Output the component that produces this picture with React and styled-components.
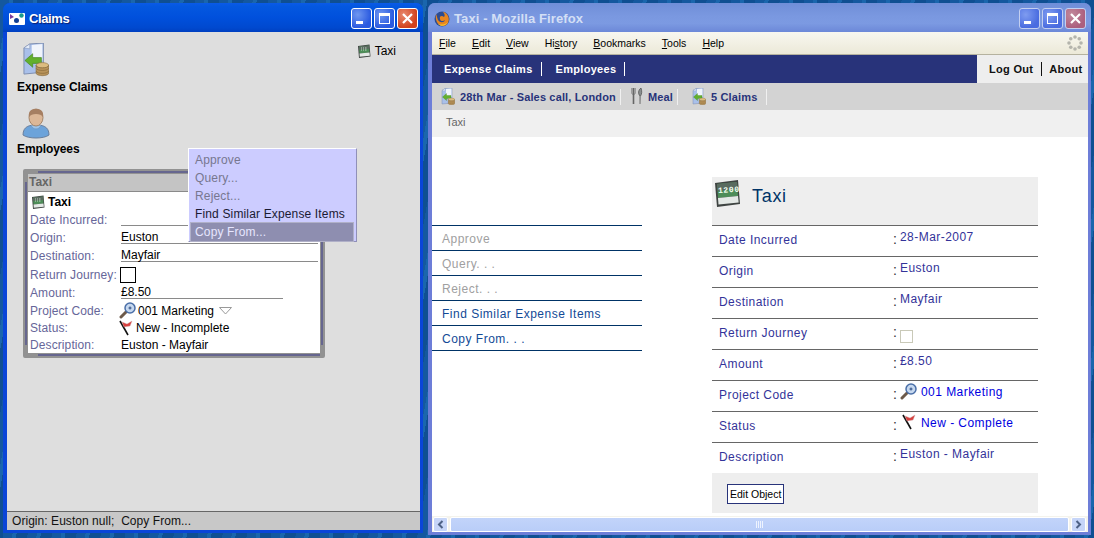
import styled, { createGlobalStyle } from "styled-components";

const GlobalStyle = createGlobalStyle`
  html, body {
    margin: 0;
    padding: 0;
    overflow: hidden;
    background: #14589f;
  }
  * { box-sizing: border-box; }
`;

/* drawings */
const CalcIcon = ({ size = 14 }) => (
  <svg width={size} height={size} viewBox="0 0 28 28">
    <path d="M2 4 L25 1 L27 25 L4 28 Z" fill="#3f4442" />
    <path d="M4 5 L24 3 L25 17 L5 19 Z" fill="#4d8d58" />
    <path d="M4 5 L24 3 L24.500 10 L4.500 12 Z" fill="#5a6b60" />
    <path d="M5 19 L25 17 L25.700 23.500 L5.500 25.500 Z" fill="#e4e9e6" />
    {size > 20 ? (
      <text x="5" y="13.500" fontSize="8" fontWeight="bold" fontFamily="Liberation Mono, monospace" fill="#f2fff2" transform="rotate(-4 14 12)">1200</text>
    ) : (
      <path d="M8 8h2M12 8h2M16 8h3M8 12h2M12 12h2M16 12h3" stroke="#e8f4e8" strokeWidth="1.500" />
    )}
  </svg>
);

const ClaimsIcon = ({ size = 34 }) => (
  <svg width={size * 0.8} height={size} viewBox="0 0 28 35">
    <path d="M2 5 L8 1 L22 0 L22 30 L2 32 Z" fill="#a9c0ea" stroke="#7d8db0" />
    <path d="M2 5 L8 1 L8 6 Z" fill="#e4ecf8" stroke="#7d8db0" strokeWidth=".5" />
    <path d="M10 2 L21 1 L21 18 L10 19 Z" fill="#f0f4fb" />
    <path d="M3 18 L11 11 L11 15 L20 15 L20 21 L11 21 L11 25 Z" fill="#62b02c" stroke="#3c7d18" strokeWidth=".6" />
    <ellipse cx="21" cy="23" rx="6.500" ry="2.800" fill="#dcbc80" stroke="#8d6f3a" strokeWidth=".6" />
    <path d="M14.500 23 V31 C14.500 34.500 27.500 34.500 27.500 31 V23 C27.500 26.500 14.500 26.500 14.500 23Z" fill="#b8935a" stroke="#7f6334" strokeWidth=".6" />
    <path d="M14.500 26 C16 29 26 29 27.500 26M14.500 29 C16 32 26 32 27.500 29" fill="none" stroke="#7f6334" strokeWidth=".6" />
  </svg>
);

const PersonIcon = () => (
  <svg width="28" height="31" viewBox="0 0 28 31">
    <path d="M1 27 C1 18 8 17 14 17 C20 17 27 18 27 27 C22 31 6 31 1 27Z" fill="#6ca3da" stroke="#6a7f9c" />
    <path d="M9 17.500 C11 22 17 22 19 17.500" fill="#9cc4ea" stroke="#6a8fb8" strokeWidth=".6" />
    <ellipse cx="14" cy="9.500" rx="7" ry="8.500" fill="#dcb797" stroke="#a58569" />
    <path d="M7 9 C6 2 10 1 14 1 C18 1 22 2 21 9 C19 5 9 5 7 9Z" fill="#a67f62" />
  </svg>
);

const MagnifierIcon = () => (
  <svg width="17" height="17" viewBox="0 0 17 17">
    <path d="M2 15 L7 10" stroke="#6d5a4a" strokeWidth="3" strokeLinecap="round" />
    <circle cx="11" cy="6" r="5" fill="#c6d8ef" stroke="#4a6fa8" strokeWidth="1.500" />
    <path d="M9.500 6h3M11 4.500v3" stroke="#2b4a80" strokeWidth="1" />
  </svg>
);

const FlagIcon = () => (
  <svg width="15" height="16" viewBox="0 0 15 16">
    <path d="M1 1 L9 15" stroke="#111" strokeWidth="1.600" />
    <path d="M3 2 L8 4 L13 1 L11 6 L5 7 Z" fill="#d8403f" stroke="#caa" strokeWidth=".4" />
  </svg>
);

const CutleryIcon = () => (
  <svg width="12" height="17" viewBox="0 0 12 17">
    <path d="M1 0 V5 C1 7 4 7 4 5 V0 M2.500 0 V16" fill="none" stroke="#666" strokeWidth="1" />
    <path d="M2.500 6 V16" stroke="#666" strokeWidth="1.600" />
    <path d="M9 16 V8 C7 6 7 2 10 0 C11 3 11 6 9.500 8" fill="#8a8f8f" stroke="#555" strokeWidth=".8" />
  </svg>
);

const FirefoxIcon = () => (
  <svg width="16" height="16" viewBox="0 0 16 16">
    <circle cx="8" cy="8" r="7.500" fill="#2d4c90" />
    <path d="M2 3 C1 8 3 15 9 15 C14 15 16 9 14 5 C13 3 11 1 9 1 C11 3 11 5 10 6 C8 4 5 5 6 8 C6 10 9 11 11 9 C10 12 6 12 4 9 C3 7 3 5 2 3Z" fill="#e8861f" />
    <path d="M4 13 C7 16 12 15 14 11 C11 14 7 14 4 13Z" fill="#f4c430" />
  </svg>
);

const AppIcon = () => (
  <svg width="16" height="14" viewBox="0 0 16 14">
    <rect x="0" y="1" width="16" height="12" rx="1" fill="#fff" />
    <path d="M1 2 L5 5 L1 7 Z" fill="#7b3b9c" />
    <circle cx="12.500" cy="3.500" r="2.200" fill="#1a9a8c" />
    <circle cx="7.500" cy="8.500" r="2.500" fill="#123f94" />
  </svg>
);

const Spinner = () => (
  <svg width="16" height="16" viewBox="0 0 16 16">
    {[0, 45, 90, 135, 180, 225, 270, 315].map((a) => (
      <circle
        key={a}
        cx={8 + 6 * Math.cos((a * Math.PI) / 180)}
        cy={8 + 6 * Math.sin((a * Math.PI) / 180)}
        r="1.800"
        fill="#b4b4ac"
      />
    ))}
  </svg>
);

const Desktop = styled.div`
  display: flex;
  align-items: flex-start;
  gap: 5px;
  width: 1094px;
  height: 538px;
  padding: 3px;
  background: repeating-linear-gradient(100deg, #14589f 0 9px, #1a66ad 9px 13px, #0f4f92 13px 24px);
`;

const Window = styled.div`
  display: flex;
  flex-direction: column;
  width: ${(p) => p.$w}px;
  height: ${(p) => p.$h}px;
  border-radius: 7px 7px 0 0;
  padding: 0 3px 3px 4px;
  background: ${(p) => (p.$active ? "#0a45d8" : "#6d7ed8")};
`;

const TitleBar = styled.div`
  display: flex;
  align-items: center;
  flex: none;
  height: 29px;
  gap: 4px;
  margin: 0 -3px 0 -4px;
  padding: 2px 5px 0 6px;
  border-radius: 7px 7px 0 0;
  font: bold 13px "Liberation Sans", Arial, sans-serif;
  color: ${(p) => (p.$active ? "#fff" : "#d3dff5")};
  text-shadow: ${(p) => (p.$active ? "1px 1px 1px #0a1f70" : "none")};
  letter-spacing: ${(p) => (p.$active ? "-.4px" : ".1px")};
  background: ${(p) =>
    p.$active
      ? "linear-gradient(#0a5ae8 0, #0458e0 12%, #0050dc 50%, #0049cf 85%, #003fc0 100%)"
      : "linear-gradient(#6f8ed8 0, #7a98e0 45%, #7c9ae2 70%, #6c88d8 100%)"};
`;

const TitleText = styled.span`
  flex: 1;
`;

const Controls = styled.div`
  display: flex;
  gap: 2px;
`;

const Control = styled.div`
  width: 21px;
  height: 21px;
  border-radius: 3px;
  border: 1px solid ${(p) => (p.$active ? "#fff" : "#c3cff0")};
  background: ${(p) =>
    p.$close
      ? p.$active
        ? "radial-gradient(circle at 30% 30%, #e88a70, #d2421c 70%)"
        : "radial-gradient(circle at 30% 30%, #c28a9c, #ac5f7e 70%)"
      : p.$active
      ? "radial-gradient(circle at 30% 30%, #6f97f0, #2a5ae0 70%)"
      : "radial-gradient(circle at 30% 30%, #7f9cf0, #4a6ce0 70%)"};

  svg {
    display: block;
  }
`;

const MinGlyph = () => (
  <svg width="19" height="19" viewBox="0 0 19 19"><rect x="4" y="12" width="7" height="3" fill="#fff" /></svg>
);
const MaxGlyph = () => (
  <svg width="19" height="19" viewBox="0 0 19 19"><rect x="4.500" y="4.500" width="10" height="10" fill="none" stroke="#fff" /><rect x="4" y="4" width="11" height="3" fill="#fff" /></svg>
);
const CloseGlyph = () => (
  <svg width="19" height="19" viewBox="0 0 19 19"><path d="M5 5 L14 14 M14 5 L5 14" stroke="#fff" strokeWidth="2.200" /></svg>
);

const WindowControls = ({ active }) => (
  <Controls>
    <Control $active={active}><MinGlyph /></Control>
    <Control $active={active}><MaxGlyph /></Control>
    <Control $active={active} $close><CloseGlyph /></Control>
  </Controls>
);

/* left window */
const ClaimsBody = styled.div`
  position: relative;
  flex: 1;
  background: #dedede;
  padding: 11px 0 0 10px;
  font: 12px "Liberation Sans", Arial, sans-serif;
  color: #000;
`;

const ClassIcon = styled.div`
  display: flex;
  flex-direction: column;
  align-items: flex-start;
  height: ${(p) => p.$h}px;

  svg {
    display: block;
    margin-left: 5px;
  }
`;

const ClassName = styled.div`
  font-weight: bold;
  letter-spacing: -0.1px;
  line-height: 15px;
  margin-top: ${(p) => p.$mt}px;
`;

const Instance = styled.div`
  position: absolute;
  top: 12px;
  right: 24px;
  display: flex;
  align-items: center;
  gap: 4px;
`;

const ObjectWindow = styled.div`
  position: absolute;
  left: 16px;
  top: 137px;
  width: 302px;
  height: 189px;
  border: 5px solid #929292;
  border-radius: 2px;
  background: #fff;

  /* the darker stripes in the middle of the frame */
  &::before {
    content: "";
    position: absolute;
    left: 10px;
    right: 0;
    top: -3px;
    bottom: -3px;
    border-top: 2px solid #66668f;
    border-bottom: 2px solid #66668f;
  }

  &::after {
    content: "";
    position: absolute;
    left: -3px;
    right: -3px;
    top: 8px;
    bottom: 8px;
    border-left: 2px solid #66668f;
    border-right: 2px solid #66668f;
  }
`;

const ObjectTitle = styled.div`
  height: 18px;
  padding: 2px 0 0 1px;
  background: #c4c4c4;
  border-bottom: 1px solid #8a8a8a;
  font: bold 12px/13px "Liberation Sans", Arial, sans-serif;
  color: #666;
`;

const ObjectHead = styled.div`
  display: flex;
  align-items: center;
  gap: 3px;
  height: 19px;
  padding-left: 3px;
  font-weight: bold;
`;

const Field = styled.div`
  display: flex;
  align-items: center;
  height: ${(p) => p.$h || 18}px;
  padding-left: 2px;
`;

const FieldLabel = styled.div`
  flex: none;
  width: 91px;
  color: #666699;
  letter-spacing: 0.1px;
`;

const FieldValue = styled.div`
  display: flex;
  align-items: center;
  gap: 2px;
  width: ${(p) => p.$w || "auto"};
  height: 100%;
  ${(p) => p.$line && "border-bottom: 1px solid #8a8a8a; height: 11px; line-height: 11px;"}

  > svg:first-child {
    margin-left: -2px;
  }
`;

const Checkbox = styled.div`
  width: 16px;
  height: 16px;
  margin-left: -1px;
  border: 1px solid #000;
`;

const Triangle = () => (
  <svg width="13" height="8" viewBox="0 0 13 8" style={{ marginLeft: 3 }}>
    <path d="M.5 .5 H12.500 L6.500 7 Z" fill="none" stroke="#999" />
  </svg>
);

const Popup = styled.div`
  position: absolute;
  left: 181px;
  top: 116px;
  width: 169px;
  height: 94px;
  padding: 2px 3px 0 2px;
  background: #ccccff;
  border: 1px solid;
  border-color: #fff #9090b8 #9090b8 #fff;
  letter-spacing: 0.15px;
`;

const PopupItem = styled.div`
  height: 18px;
  line-height: 18px;
  padding-left: 4px;
  color: ${(p) => (p.$selected ? "#e6e6ff" : p.$disabled ? "#77778f" : "#1a1a33")};
  background: ${(p) => (p.$selected ? "#8e8eb0" : "transparent")};
  ${(p) => p.$selected && "outline: 1px solid #b0b0c8;"}
`;

const StatusBar = styled.div`
  flex: none;
  height: 19px;
  padding-left: 5px;
  background: #c8c8c8;
  border-top: 1px solid #666;
  font: 12px/18px "Liberation Sans", Arial, sans-serif;
  letter-spacing: 0.05px;
  color: #111;
  white-space: pre;
`;

/* right window */
const BrowserBody = styled.div`
  display: flex;
  flex-direction: column;
  flex: 1;
  min-height: 0;
  background: #fff;
  font-family: "Liberation Sans", Arial, sans-serif;
`;

const MenuBar = styled.div`
  display: flex;
  align-items: center;
  justify-content: space-between;
  flex: none;
  height: 23px;
  padding: 0 5px 0 7px;
  background: linear-gradient(#f8f7f0, #ece9d8);
  border-bottom: 1px solid #b5b29f;
`;

const Menus = styled.div`
  display: flex;
  gap: 16px;
  font-size: 10.5px;
  color: #000;
`;

const MenuName = styled.span`
  u { text-underline-offset: 1px; }
`;

const NavBar = styled.div`
  display: flex;
  flex: none;
  height: 28px;
  font-size: 11px;
  font-weight: bold;
  letter-spacing: 0.3px;
  white-space: nowrap;
`;

const NavMain = styled.div`
  display: flex;
  align-items: center;
  flex: 1;
  padding-left: 12px;
  background: #28337a;
  color: #fff;
`;

const NavAside = styled.div`
  display: flex;
  align-items: center;
  flex: none;
  width: 111px;
  padding-left: 12px;
  background: #eeeeee;
  color: #111;
`;

const NavLink = styled.div`
  padding-right: 8px;
  margin-right: ${(p) => p.$gap || 14}px;
  line-height: 14px;
  border-right: 1px solid ${(p) => p.$sep || "transparent"};

  &:last-child {
    margin-right: 0;
  }
`;

const ToolBar = styled.div`
  display: flex;
  align-items: center;
  flex: none;
  height: 27px;
  padding-left: 9px;
  background: #d3d3d3;
  color: #28337a;
  font-size: 11px;
  font-weight: bold;
  letter-spacing: 0.15px;
  white-space: nowrap;
`;

const ToolItem = styled.div`
  display: flex;
  align-items: center;
  gap: 5px;
  height: 16px;
  margin-right: ${(p) => p.$mr || 0}px;
  padding-right: ${(p) => p.$pr || 4}px;
  border-right: 1px solid #f0f0f0;
`;

const Crumb = styled.div`
  flex: none;
  height: 27px;
  padding-left: 14px;
  background: #f0f0f0;
  font-size: 11px;
  line-height: 25px;
  color: #666;
`;

const Page = styled.div`
  display: flex;
  flex: 1;
  min-height: 0;
  padding-top: 40px;
  overflow: hidden;
`;

const ActionList = styled.div`
  flex: none;
  width: 210px;
  margin-top: 48px;
  margin-right: 70px;
  align-self: flex-start;
  border-top: 1px solid #003366;
`;

const Action = styled.div`
  height: 25px;
  padding-left: 10px;
  border-bottom: 1px solid #003366;
  font-size: 12px;
  line-height: 26px;
  letter-spacing: 0.5px;
  color: ${(p) => (p.$disabled ? "#a0a0a0" : "#124a96")};
`;

const Card = styled.div`
  flex: none;
  width: 326px;
`;

const CardHead = styled.div`
  display: flex;
  align-items: flex-start;
  gap: 11px;
  height: 49px;
  padding: 2px 0 0 1px;
  background: #eeeeee;
  border-bottom: 1px solid #666;
  font-size: 18px;
  letter-spacing: 0.7px;
  color: #003366;
`;

const CardTitle = styled.div`
  padding-top: 7px;
  line-height: 20px;
`;

const CardRow = styled.div`
  display: grid;
  grid-template-columns: 174px 7px 1fr;
  height: ${(p) => (p.$last ? 30 : 31)}px;
  padding-left: 7px;
  border-bottom: ${(p) => (p.$last ? "none" : "1px solid #666")};
  font-size: 12px;
  letter-spacing: 0.45px;
  color: #333399;
`;

const RowLabel = styled.div`
  line-height: 28px;
`;

const RowColon = styled.div`
  font-size: 14px;
  line-height: 27px;
  color: #333;
`;

const RowValue = styled.div`
  display: flex;
  align-items: flex-start;
  gap: 4px;
  padding-top: 4px;
  line-height: 15px;
  color: ${(p) => (p.$link ? "#0000e0" : "#333399")};

  svg {
    margin-top: -2px;
  }
`;

const FlagSlot = styled.span`
  display: inline-flex;
  margin-left: 2px;
`;

const WebCheckbox = styled.div`
  width: 13px;
  height: 13px;
  margin-top: 11px;
  border: 1px solid #c9c9b8;
`;

const CardFoot = styled.div`
  height: 40px;
  padding: 11px 0 0 15px;
  background: #eeeeee;
`;

const EditButton = styled.div`
  display: inline-block;
  height: 20px;
  padding: 0 2px;
  border: 1px solid #28337a;
  background: #fff;
  font-size: 10.5px;
  line-height: 18px;
  color: #000;
`;

const Scrollbar = styled.div`
  display: flex;
  flex: none;
  gap: 2px;
  height: 16px;
  padding: 1px 2px 0 1px;
  background: #f4f3ec;
`;

const ScrollButton = styled.div`
  display: flex;
  align-items: center;
  justify-content: center;
  width: 15px;
  height: 15px;
  border: 1px solid #fff;
  border-radius: 2px;
  background: #c6d5f8;
`;

const ScrollThumb = styled.div`
  display: flex;
  align-items: center;
  justify-content: center;
  flex: 1;
  height: 15px;
  border: 1px solid #fff;
  border-radius: 2px;
  background: linear-gradient(#c2d4fa, #b9cdf8);
`;

const Chevron = ({ left }) => (
  <svg width="7" height="9" viewBox="0 0 7 9">
    <path d={left ? "M5.500 1 L2 4.500 L5.500 8" : "M1.500 1 L5 4.500 L1.500 8"} fill="none" stroke="#4d6185" strokeWidth="2" />
  </svg>
);

const Grip = () => (
  <svg width="8" height="7" viewBox="0 0 8 7">
    <path d="M.5 0V7M2.500 0V7M4.500 0V7M6.500 0V7" stroke="#eef3fe" />
  </svg>
);

const rows = [
  { label: "Date Incurred", value: "28-Mar-2007" },
  { label: "Origin", value: "Euston" },
  { label: "Destination", value: "Mayfair" },
  { label: "Return Journey", check: true },
  { label: "Amount", value: "£8.50" },
  { label: "Project Code", value: "001 Marketing", link: true, icon: <MagnifierIcon /> },
  { label: "Status", value: "New - Complete", link: true, icon: <FlagSlot><FlagIcon /></FlagSlot> },
  { label: "Description", value: "Euston - Mayfair", last: true },
];

const App = () => (
  <>
    <GlobalStyle />
    <Desktop>
      <Window $w={420} $h={530} $active>
        <TitleBar $active>
          <AppIcon />
          <TitleText>Claims</TitleText>
          <WindowControls active />
        </TitleBar>
        <ClaimsBody>
          <ClassIcon $h={65}>
            <ClaimsIcon />
            <ClassName $mt={3}>Expense Claims</ClassName>
          </ClassIcon>
          <ClassIcon $h={60}>
            <PersonIcon />
            <ClassName $mt={3}>Employees</ClassName>
          </ClassIcon>
          <Instance>
            <CalcIcon />
            Taxi
          </Instance>
          <ObjectWindow>
            <ObjectTitle>Taxi</ObjectTitle>
            <ObjectHead>
              <CalcIcon />
              Taxi
            </ObjectHead>
            <Field>
              <FieldLabel>Date Incurred:</FieldLabel>
              <FieldValue $line $w="197px" />
            </Field>
            <Field>
              <FieldLabel>Origin:</FieldLabel>
              <FieldValue $line $w="197px">Euston</FieldValue>
            </Field>
            <Field>
              <FieldLabel>Destination:</FieldLabel>
              <FieldValue $line $w="197px">Mayfair</FieldValue>
            </Field>
            <Field $h={19}>
              <FieldLabel>Return Journey:</FieldLabel>
              <Checkbox />
            </Field>
            <Field>
              <FieldLabel>Amount:</FieldLabel>
              <FieldValue $line $w="162px">£8.50</FieldValue>
            </Field>
            <Field $h={17}>
              <FieldLabel>Project Code:</FieldLabel>
              <FieldValue>
                <MagnifierIcon />
                001 Marketing
                <Triangle />
              </FieldValue>
            </Field>
            <Field $h={17}>
              <FieldLabel>Status:</FieldLabel>
              <FieldValue>
                <FlagIcon />
                New - Incomplete
              </FieldValue>
            </Field>
            <Field $h={17}>
              <FieldLabel>Description:</FieldLabel>
              <FieldValue>Euston - Mayfair</FieldValue>
            </Field>
          </ObjectWindow>
          <Popup>
            <PopupItem $disabled>Approve</PopupItem>
            <PopupItem $disabled>Query...</PopupItem>
            <PopupItem $disabled>Reject...</PopupItem>
            <PopupItem>Find Similar Expense Items</PopupItem>
            <PopupItem $selected>Copy From...</PopupItem>
          </Popup>
        </ClaimsBody>
        <StatusBar>Origin: Euston null;  Copy From...</StatusBar>
      </Window>

      <Window $w={663} $h={532}>
        <TitleBar>
          <FirefoxIcon />
          <TitleText>Taxi - Mozilla Firefox</TitleText>
          <WindowControls />
        </TitleBar>
        <BrowserBody>
          <MenuBar>
            <Menus>
              <MenuName><u>F</u>ile</MenuName>
              <MenuName><u>E</u>dit</MenuName>
              <MenuName><u>V</u>iew</MenuName>
              <MenuName>Hi<u>s</u>tory</MenuName>
              <MenuName><u>B</u>ookmarks</MenuName>
              <MenuName><u>T</u>ools</MenuName>
              <MenuName><u>H</u>elp</MenuName>
            </Menus>
            <Spinner />
          </MenuBar>
          <NavBar>
            <NavMain>
              <NavLink $sep="#fff">Expense Claims</NavLink>
              <NavLink $sep="#fff">Employees</NavLink>
            </NavMain>
            <NavAside>
              <NavLink $sep="#111" $gap={7}>Log Out</NavLink>
              <NavLink>About</NavLink>
            </NavAside>
          </NavBar>
          <ToolBar>
            <ToolItem $mr={10}>
              <ClaimsIcon size={17.5} />
              28th Mar - Sales call, London
            </ToolItem>
            <ToolItem $mr={14}>
              <CutleryIcon />
              Meal
            </ToolItem>
            <ToolItem $pr={9}>
              <ClaimsIcon size={17.5} />
              5 Claims
            </ToolItem>
          </ToolBar>
          <Crumb>Taxi</Crumb>
          <Page>
            <ActionList>
              <Action $disabled>Approve</Action>
              <Action $disabled>Query. . .</Action>
              <Action $disabled>Reject. . .</Action>
              <Action>Find Similar Expense Items</Action>
              <Action>Copy From. . .</Action>
            </ActionList>
            <Card>
              <CardHead>
                <CalcIcon size={28} />
                <CardTitle>Taxi</CardTitle>
              </CardHead>
              {rows.map((row) => (
                <CardRow key={row.label} $last={row.last}>
                  <RowLabel>{row.label}</RowLabel>
                  <RowColon>:</RowColon>
                  {row.check ? (
                    <WebCheckbox />
                  ) : (
                    <RowValue $link={row.link}>
                      {row.icon}
                      {row.value}
                    </RowValue>
                  )}
                </CardRow>
              ))}
              <CardFoot>
                <EditButton>Edit Object</EditButton>
              </CardFoot>
            </Card>
          </Page>
          <Scrollbar>
            <ScrollButton><Chevron left /></ScrollButton>
            <ScrollThumb><Grip /></ScrollThumb>
            <ScrollButton><Chevron /></ScrollButton>
          </Scrollbar>
        </BrowserBody>
      </Window>
    </Desktop>
  </>
);

export default App;
